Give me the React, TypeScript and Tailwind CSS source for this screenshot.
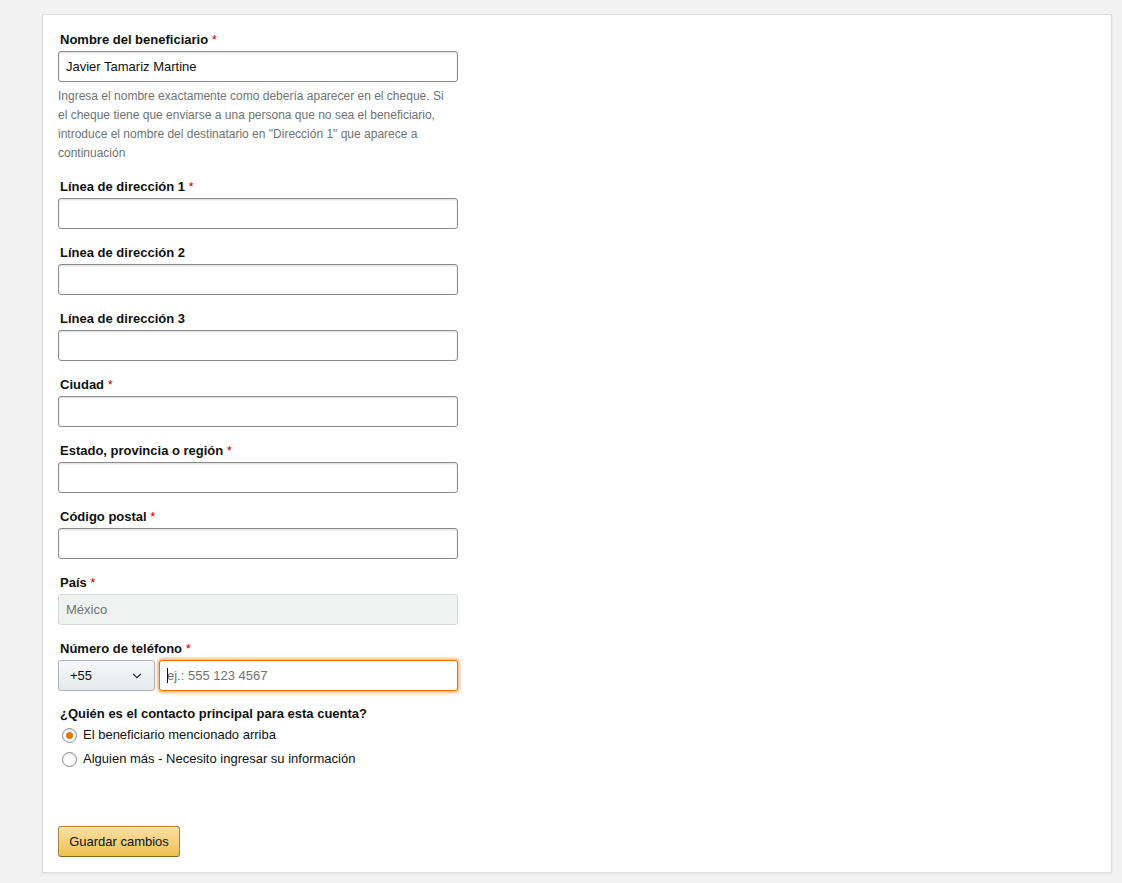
import React, { useState } from 'react';
import { ChevronDown } from 'lucide-react';

const font = { fontFamily: '"Liberation Sans", Arial, sans-serif' };

const helperLines = [
  'Ingresa el nombre exactamente como debería aparecer en el cheque. Si',
  'el cheque tiene que enviarse a una persona que no sea el beneficiario,',
  'introduce el nombre del destinatario en "Dirección 1" que aparece a',
  'continuación',
];

const Label: React.FC<{ text: string; required?: boolean }> = ({ text, required }) => (
  <div className="pl-[2px] pb-[2px] text-[13px] leading-[19px] font-bold text-[#0f1111]">
    {text}
    {required && <span className="font-normal text-[#c40000]"> *</span>}
  </div>
);

const TextField: React.FC<{ label: string; required?: boolean; value?: string }> = ({ label, required, value }) => (
  <div className="mb-[14px]">
    <Label text={label} required={required} />
    <input
      defaultValue={value}
      className="block w-[400px] h-[31px] px-[7px] text-[13px] text-[#0f1111] bg-white border border-[#888c8c] rounded-[3px] shadow-[inset_0_1px_2px_rgba(15,17,17,0.15)] outline-none"
      style={font}
    />
  </div>
);

export default function App() {
  const [contact, setContact] = useState('beneficiario');

  return (
    <div className="min-h-[883px] bg-[#f2f2f2] pt-[14px] pb-[10px]" style={font}>
      <div className="ml-[42px] w-[1070px] bg-white border border-[#dddddd] shadow-[0_1px_2px_rgba(0,0,0,0.06)] pl-[15px] pt-[15px] pb-[15px]">
        <div className="mb-[14px]">
          <Label text="Nombre del beneficiario" required />
          <input
            defaultValue="Javier Tamariz Martine"
            className="block w-[400px] h-[31px] px-[7px] text-[13px] text-[#0f1111] bg-white border border-[#888c8c] rounded-[3px] shadow-[inset_0_1px_2px_rgba(15,17,17,0.15)] outline-none"
            style={font}
          />
          <p className="mt-[5px] w-[400px] text-[12px] leading-[19px] text-[#6f7373]">
            {helperLines.map((line) => (
              <span key={line} className="block whitespace-nowrap">
                {line}
              </span>
            ))}
          </p>
        </div>

        <TextField label="Línea de dirección 1" required />
        <TextField label="Línea de dirección 2" />
        <TextField label="Línea de dirección 3" />
        <TextField label="Ciudad" required />
        <TextField label="Estado, provincia o región" required />
        <TextField label="Código postal" required />

        <div className="mb-[14px]">
          <Label text="País" required />
          <div className="w-[400px] h-[31px] px-[7px] flex items-center text-[13px] text-[#6f7373] bg-[#f0f2f2] border border-[#d5d9d9] rounded-[3px]">
            México
          </div>
        </div>

        <div className="mb-[14px]">
          <Label text="Número de teléfono" required />
          <div className="flex w-[400px] gap-[4px]">
            <div className="w-[97px] h-[31px] flex items-center justify-between pl-[11px] pr-[10px] text-[13px] text-[#0f1111] bg-gradient-to-b from-[#f7f8fa] to-[#e7e9ec] border border-[#adb1b8] rounded-[3px]">
              <span>+55</span>
              <ChevronDown size={14} strokeWidth={2} className="text-[#333]" />
            </div>
            <div className="relative flex-1">
              <input
                placeholder="ej.: 555 123 4567"
                className="block w-full h-[31px] px-[7px] text-[13px] text-[#0f1111] placeholder:text-[#6f7373] bg-white border border-[#e77600] rounded-[3px] shadow-[0_0_3px_2px_rgba(228,121,17,0.5)] outline-none"
                style={font}
              />
              <span className="absolute left-[8px] top-[8px] w-px h-[15px] bg-[#0f1111]" />
            </div>
          </div>
        </div>

        <div className="text-[13px] leading-[18px] font-bold text-[#0f1111] pl-[2px]">
          ¿Quién es el contacto principal para esta cuenta?
        </div>
        {[
          { id: 'beneficiario', text: 'El beneficiario mencionado arriba' },
          { id: 'otro', text: 'Alguien más - Necesito ingresar su información' },
        ].map((opt) => (
          <label key={opt.id} className="flex items-center h-[24px] pl-[4px] gap-[6px] text-[13px] text-[#0f1111] cursor-pointer">
            <span
              onClick={() => setContact(opt.id)}
              className="w-[15px] h-[15px] rounded-full border border-[#888c8c] bg-white flex items-center justify-center shadow-[inset_0_1px_2px_rgba(15,17,17,0.15)]"
            >
              {contact === opt.id && <span className="w-[7px] h-[7px] rounded-full bg-[#e77600]" />}
            </span>
            <span onClick={() => setContact(opt.id)}>{opt.text}</span>
          </label>
        ))}

        <button
          className="mt-[55px] w-[122px] h-[31px] text-[13px] text-[#111] bg-gradient-to-b from-[#f7dfa5] to-[#f0c14b] border border-[#a88734] border-b-[#846a29] rounded-[3px] shadow-[inset_0_1px_0_rgba(255,255,255,0.4)]"
          style={font}
        >
          Guardar cambios
        </button>
      </div>
    </div>
  );
}
